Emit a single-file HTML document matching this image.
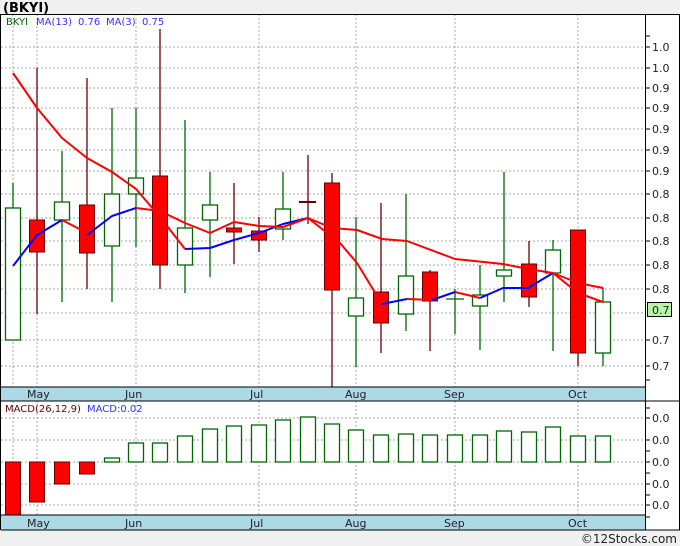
<!DOCTYPE html>
<html><head><meta charset="utf-8"><style>
html,body{margin:0;padding:0;background:#f0f0f0;}
body{width:680px;height:546px;overflow:hidden;position:relative;font-family:"Liberation Sans","DejaVu Sans",sans-serif;}
svg{position:absolute;left:0;top:0;}
</style></head><body>
<svg width="680" height="546" viewBox="0 0 680 546" xmlns="http://www.w3.org/2000/svg" font-family="DejaVu Sans, Liberation Sans, sans-serif">
<rect x="0" y="0" width="680" height="546" fill="#f0f0f0"/>
<text x="3" y="12" font-size="13" font-weight="bold" fill="#000">(BKYI)</text>
<rect x="1" y="14" width="678" height="516" fill="#fff"/>
<g stroke="#aaa" stroke-width="1" stroke-dasharray="2,2">
<line x1="1" y1="47" x2="645" y2="47"/><line x1="1" y1="68" x2="645" y2="68"/><line x1="1" y1="88" x2="645" y2="88"/><line x1="1" y1="108" x2="645" y2="108"/><line x1="1" y1="129" x2="645" y2="129"/><line x1="1" y1="150" x2="645" y2="150"/><line x1="1" y1="171" x2="645" y2="171"/><line x1="1" y1="194" x2="645" y2="194"/><line x1="1" y1="218" x2="645" y2="218"/><line x1="1" y1="241" x2="645" y2="241"/><line x1="1" y1="265" x2="645" y2="265"/><line x1="1" y1="289" x2="645" y2="289"/><line x1="1" y1="313" x2="645" y2="313"/><line x1="1" y1="340" x2="645" y2="340"/><line x1="1" y1="366" x2="645" y2="366"/>
<line x1="1" y1="418" x2="645" y2="418"/><line x1="1" y1="440" x2="645" y2="440"/><line x1="1" y1="462" x2="645" y2="462"/><line x1="1" y1="484" x2="645" y2="484"/><line x1="1" y1="505" x2="645" y2="505"/>
<line x1="13" y1="14" x2="13" y2="387"/><line x1="37" y1="14" x2="37" y2="387"/><line x1="136" y1="14" x2="136" y2="387"/><line x1="259" y1="14" x2="259" y2="387"/><line x1="356" y1="14" x2="356" y2="387"/><line x1="455" y1="14" x2="455" y2="387"/><line x1="578" y1="14" x2="578" y2="387"/>
<line x1="13" y1="401" x2="13" y2="515"/><line x1="37" y1="401" x2="37" y2="515"/><line x1="136" y1="401" x2="136" y2="515"/><line x1="259" y1="401" x2="259" y2="515"/><line x1="356" y1="401" x2="356" y2="515"/><line x1="455" y1="401" x2="455" y2="515"/><line x1="578" y1="401" x2="578" y2="515"/>
</g>
<text x="6" y="25" font-size="10" fill="#060">BKYI</text>
<text x="36" y="25" font-size="10" fill="#33f">MA(13)</text><text x="78" y="25" font-size="10" fill="#33f">0.76</text>
<text x="106" y="25" font-size="10" fill="#33f">MA(3)</text><text x="142" y="25" font-size="10" fill="#33f">0.75</text>
<g stroke-width="1.3">
<g stroke="#060"><line x1="13" y1="183" x2="13" y2="340"/><line x1="62" y1="151" x2="62" y2="302"/><line x1="112" y1="108" x2="112" y2="302"/><line x1="136" y1="108" x2="136" y2="247"/><line x1="185" y1="120" x2="185" y2="293"/><line x1="210" y1="172" x2="210" y2="277"/><line x1="283" y1="172" x2="283" y2="240"/><line x1="356" y1="217" x2="356" y2="367"/><line x1="406" y1="194" x2="406" y2="331"/><line x1="455" y1="289" x2="455" y2="334"/><line x1="480" y1="265" x2="480" y2="350"/><line x1="504" y1="172" x2="504" y2="302"/><line x1="553" y1="240" x2="553" y2="351"/><line x1="603" y1="288" x2="603" y2="366"/><line x1="446" y1="299" x2="464" y2="299"/></g>
<g stroke="#600"><line x1="37" y1="68" x2="37" y2="314"/><line x1="87" y1="78" x2="87" y2="289"/><line x1="160" y1="29" x2="160" y2="289"/><line x1="234" y1="183" x2="234" y2="264"/><line x1="259" y1="217" x2="259" y2="252"/><line x1="308" y1="155" x2="308" y2="224"/><line x1="332" y1="173" x2="332" y2="387"/><line x1="381" y1="203" x2="381" y2="353"/><line x1="430" y1="270" x2="430" y2="351"/><line x1="529" y1="241" x2="529" y2="307"/><line x1="578" y1="230" x2="578" y2="366"/></g>
<line x1="299" y1="202" x2="316" y2="202" stroke="#600" stroke-width="2"/>
</g>
<g fill="#fff" stroke="#060" stroke-width="1.3">
<rect x="5.5" y="208" width="15" height="132"/><rect x="54.5" y="202" width="15" height="18"/><rect x="104.5" y="194" width="15" height="52"/><rect x="128.5" y="178" width="15" height="16"/><rect x="177.5" y="228" width="15" height="37"/><rect x="202.5" y="205" width="15" height="15"/><rect x="275.5" y="209" width="15" height="20"/><rect x="348.5" y="298" width="15" height="18"/><rect x="398.5" y="276" width="15" height="38"/><rect x="472.5" y="295" width="15" height="11"/><rect x="496.5" y="270" width="15" height="6"/><rect x="545.5" y="250" width="15" height="23"/><rect x="595.5" y="302" width="15" height="51"/>
</g>
<g fill="#f00" stroke="#600" stroke-width="1">
<rect x="29.5" y="220" width="15" height="32"/><rect x="79.5" y="205" width="15" height="48"/><rect x="152.5" y="176" width="15" height="89"/><rect x="226.5" y="228" width="15" height="4"/><rect x="251.5" y="231" width="15" height="9"/><rect x="324.5" y="183" width="15" height="107"/><rect x="373.5" y="292" width="15" height="31"/><rect x="422.5" y="272" width="15" height="29"/><rect x="521.5" y="264" width="15" height="33"/><rect x="570.5" y="230" width="15" height="123"/>
</g>
<g fill="none" stroke-width="2" stroke-linejoin="round">
<polyline stroke="#f00" points="13,73 37,108 62,138 87,158 112,172 136,189 160,217 185,249"/>
<polyline stroke="#00f" points="185,249 210,248 234,240 259,233 283,224 308,218"/>
<polyline stroke="#f00" points="308,218 340,243 357,263 382,304"/>
<polyline stroke="#00f" points="382,304 407,299"/>
<polyline stroke="#f00" points="407,299 432,300"/>
<polyline stroke="#00f" points="432,300 455,292"/>
<polyline stroke="#f00" points="455,292 480,298"/>
<polyline stroke="#00f" points="480,298 503,288 528,288 553,273"/>
<polyline stroke="#f00" points="553,273 578,293 603,302"/>
<polyline stroke="#f00" points="136,208 160,211 185,223 210,233 234,222 259,226 283,227 308,218 332,228 357,230 382,239 407,241 455,259 503,264 528,269 553,273 578,283 603,288"/>
<polyline stroke="#00f" points="13,266 37,235 62,220"/>
<polyline stroke="#f00" points="62,220 87,233"/>
<polyline stroke="#00f" points="87,235 112,216 136,208"/>
</g>
<rect x="1" y="387" width="644" height="14" fill="#add8e6"/>
<line x1="1" y1="387" x2="645" y2="387" stroke="#000"/>
<line x1="1" y1="401" x2="680" y2="401" stroke="#000"/>
<g font-size="11" fill="#222"><text x="27" y="398">May</text><text x="125" y="398">Jun</text><text x="250" y="398">Jul</text><text x="345" y="398">Aug</text><text x="444" y="398">Sep</text><text x="568" y="398">Oct</text></g>
<text x="5" y="412" font-size="10" fill="#600">MACD(26,12,9)</text>
<text x="87" y="412" font-size="10" fill="#33f">MACD:0.02</text>
<g fill="#f00" stroke="#600" stroke-width="1">
<rect x="5.5" y="462" width="15" height="53"/><rect x="29.5" y="462" width="15" height="40"/><rect x="54.5" y="462" width="15" height="22"/><rect x="79.5" y="462" width="15" height="12"/>
</g>
<g fill="#fff" stroke="#060" stroke-width="1.3">
<rect x="104.5" y="458" width="15" height="4"/><rect x="128.5" y="443" width="15" height="19"/><rect x="152.5" y="443" width="15" height="19"/><rect x="177.5" y="436" width="15" height="26"/><rect x="202.5" y="429" width="15" height="33"/><rect x="226.5" y="426" width="15" height="36"/><rect x="251.5" y="425" width="15" height="37"/><rect x="275.5" y="420" width="15" height="42"/><rect x="300.5" y="417" width="15" height="45"/><rect x="324.5" y="424" width="15" height="38"/><rect x="348.5" y="430" width="15" height="32"/><rect x="373.5" y="435" width="15" height="27"/><rect x="398.5" y="434" width="15" height="28"/><rect x="422.5" y="435" width="15" height="27"/><rect x="447.5" y="435" width="15" height="27"/><rect x="472.5" y="435" width="15" height="27"/><rect x="496.5" y="431" width="15" height="31"/><rect x="521.5" y="432" width="15" height="30"/><rect x="545.5" y="427" width="15" height="35"/><rect x="570.5" y="436" width="15" height="26"/><rect x="595.5" y="436" width="15" height="26"/>
</g>
<rect x="1" y="515" width="644" height="15" fill="#add8e6"/>
<line x1="1" y1="515" x2="645" y2="515" stroke="#000"/>
<line x1="1" y1="530" x2="680" y2="530" stroke="#000"/>
<g font-size="11" fill="#222"><text x="27" y="527">May</text><text x="125" y="527">Jun</text><text x="250" y="527">Jul</text><text x="345" y="527">Aug</text><text x="444" y="527">Sep</text><text x="568" y="527">Oct</text></g>
<line x1="645.5" y1="14" x2="645.5" y2="530" stroke="#000"/>
<line x1="0.5" y1="14" x2="0.5" y2="530" stroke="#000"/>
<line x1="679.5" y1="14" x2="679.5" y2="530" stroke="#000"/>
<line x1="0" y1="14.5" x2="680" y2="14.5" stroke="#000"/>
<g stroke="#000"><line x1="645" y1="36" x2="650" y2="36"/><line x1="645" y1="47" x2="650" y2="47"/><line x1="645" y1="68" x2="650" y2="68"/><line x1="645" y1="88" x2="650" y2="88"/><line x1="645" y1="108" x2="650" y2="108"/><line x1="645" y1="129" x2="650" y2="129"/><line x1="645" y1="150" x2="650" y2="150"/><line x1="645" y1="171" x2="650" y2="171"/><line x1="645" y1="194" x2="650" y2="194"/><line x1="645" y1="218" x2="650" y2="218"/><line x1="645" y1="241" x2="650" y2="241"/><line x1="645" y1="265" x2="650" y2="265"/><line x1="645" y1="289" x2="650" y2="289"/><line x1="645" y1="340" x2="650" y2="340"/><line x1="645" y1="366" x2="650" y2="366"/><line x1="645" y1="380" x2="650" y2="380"/>
<line x1="645" y1="408" x2="650" y2="408"/><line x1="645" y1="418" x2="650" y2="418"/><line x1="645" y1="440" x2="650" y2="440"/><line x1="645" y1="451" x2="650" y2="451"/><line x1="645" y1="462" x2="650" y2="462"/><line x1="645" y1="473" x2="650" y2="473"/><line x1="645" y1="484" x2="650" y2="484"/><line x1="645" y1="495" x2="650" y2="495"/><line x1="645" y1="505" x2="650" y2="505"/><line x1="645" y1="517" x2="650" y2="517"/></g>
<g font-size="11" fill="#222">
<text x="652" y="51">1.0</text><text x="652" y="72">1.0</text><text x="652" y="92">0.9</text><text x="652" y="112">0.9</text><text x="652" y="133">0.9</text><text x="652" y="154">0.9</text><text x="652" y="175">0.9</text><text x="652" y="198">0.8</text><text x="652" y="222">0.8</text><text x="652" y="245">0.8</text><text x="652" y="269">0.8</text><text x="652" y="293">0.8</text><text x="652" y="344">0.7</text><text x="652" y="370">0.7</text>
<text x="652" y="422">0.0</text><text x="652" y="444">0.0</text><text x="652" y="466">0.0</text><text x="652" y="488">0.0</text><text x="652" y="509">0.0</text>
</g>
<rect x="647.5" y="302.5" width="24" height="14" fill="#b8f5a8" stroke="#000"/>
<text x="652" y="314" font-size="11" fill="#222">0.7</text>
<text x="677" y="543" font-size="12" fill="#222" text-anchor="end">©12Stocks.com</text>
</svg>
</body></html>
